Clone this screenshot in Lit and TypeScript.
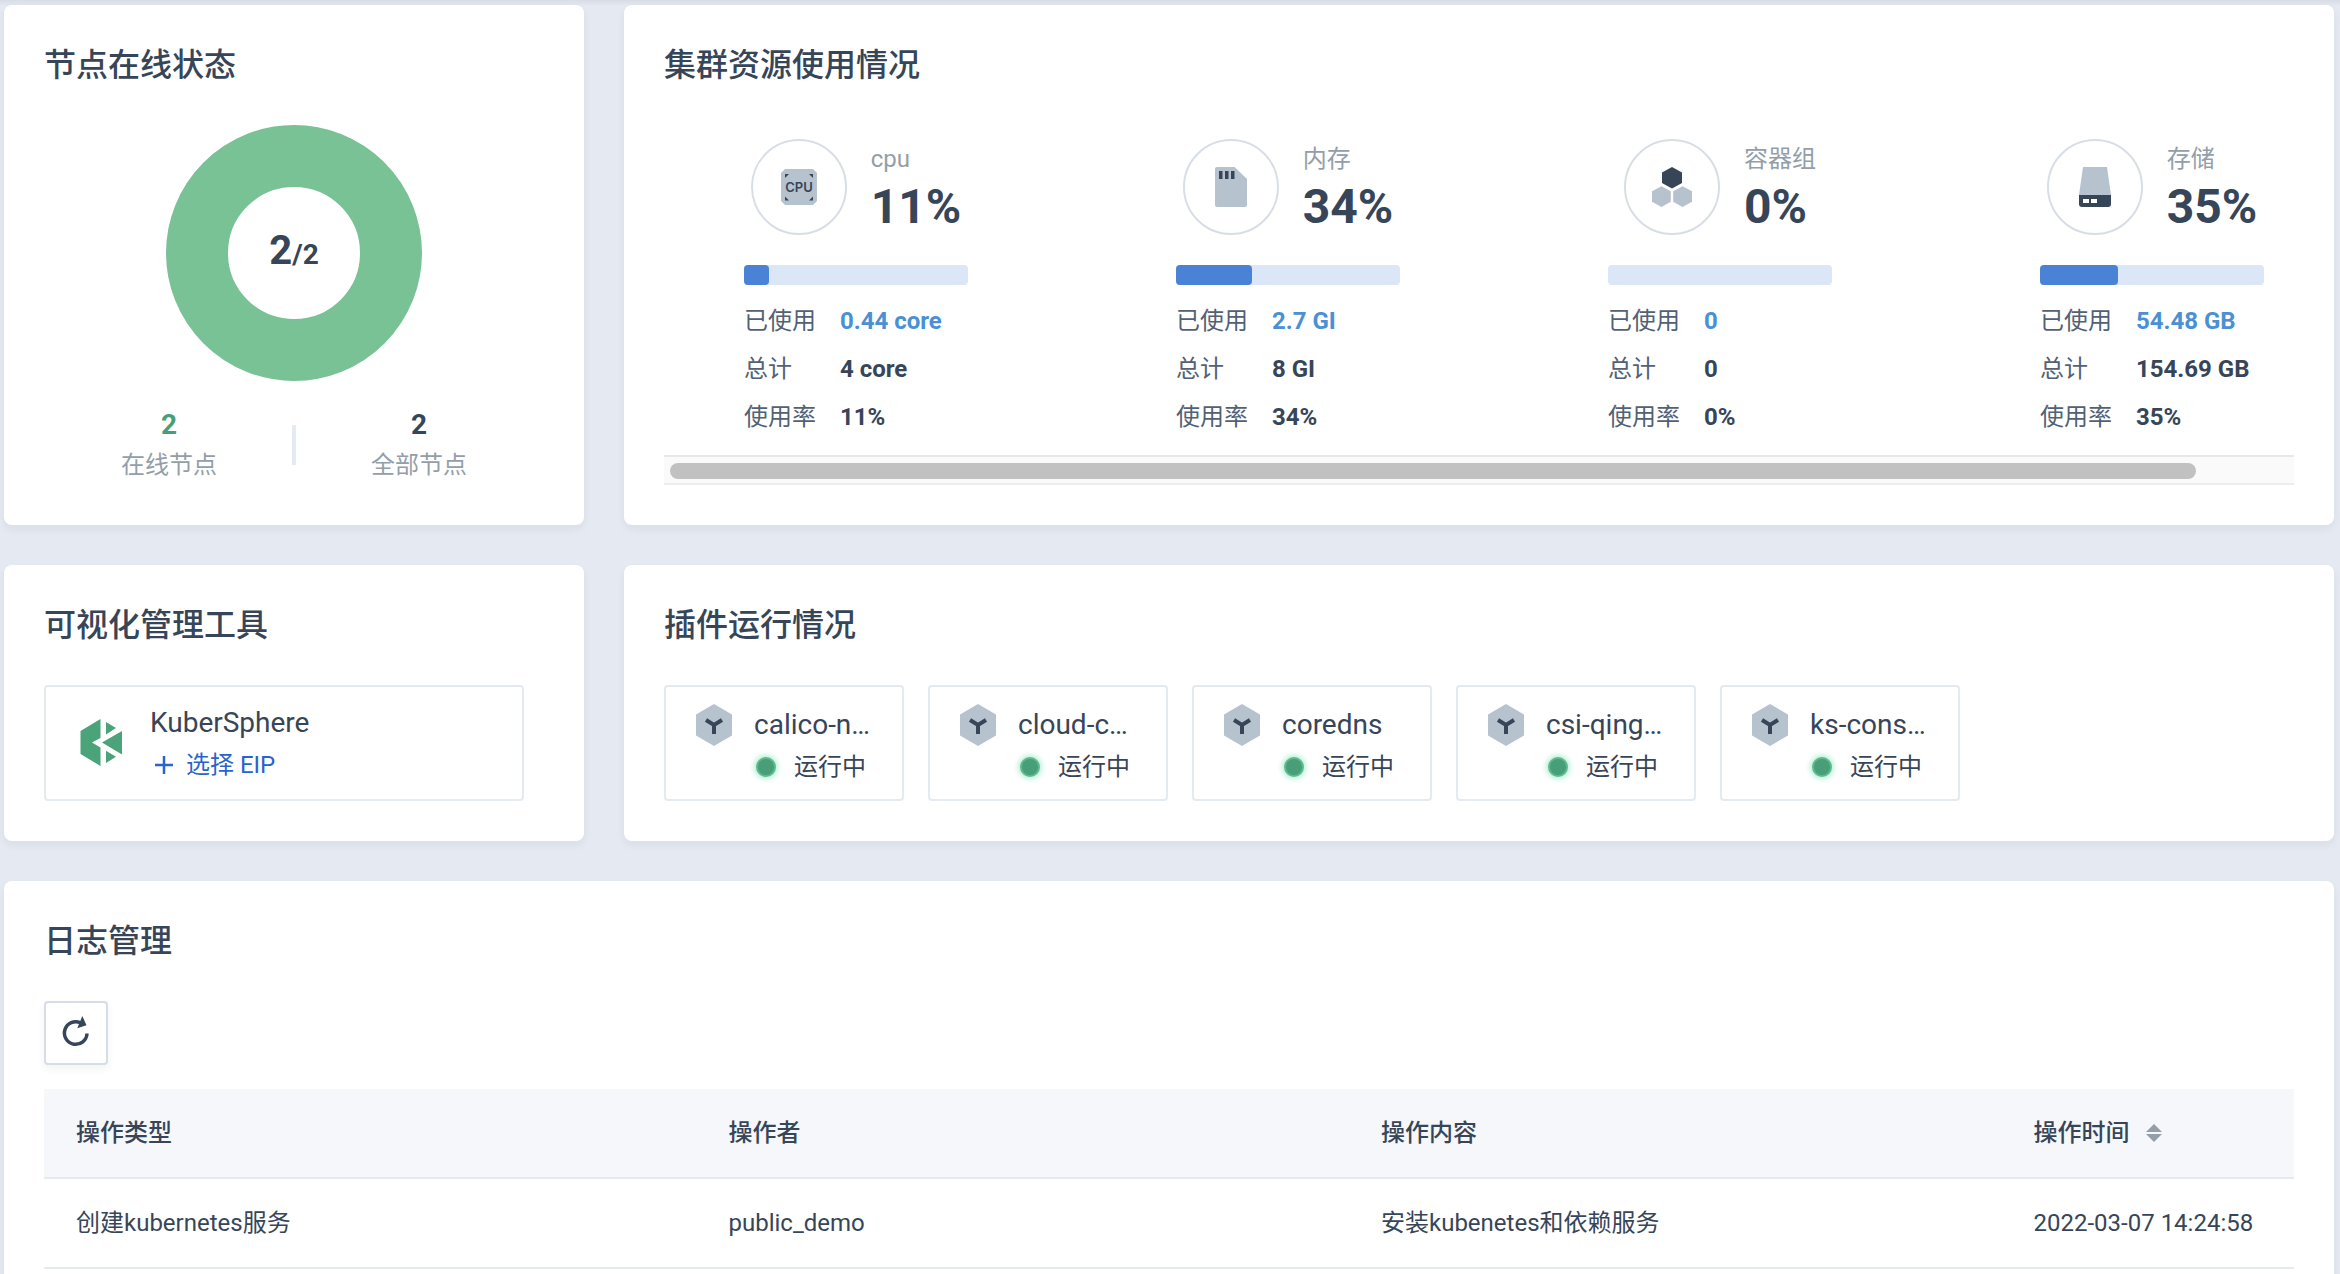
import { LitElement, html, css, svg } from "lit";
import { customElement } from "lit/decorators.js";

interface Metric {
  name: string;
  percent: number;
  used: string;
  total: string;
  icon: unknown;
}

const cpuIcon = svg`
  <path d="M6 2H34L38 6V34L34 38H6L2 34V6Z" fill="#b6c2cd" stroke-linejoin="round"/>
  <path d="M6 7h4l-4 4zM34 7h-4l4 4zM6 33.500h4l-4-4zM34 33.500h-4l4-4z" fill="#374558"/>
  <text x="20" y="25" text-anchor="middle" font-family="Inter, sans-serif" font-size="13" font-weight="600" fill="#374558">CPU</text>`;

const memoryIcon = svg`
  <path d="M6 0H23.500L36 12V38a2 2 0 0 1-2 2H6a2 2 0 0 1-2-2V2a2 2 0 0 1 2-2z" fill="#b6c2cd"/>
  <path d="M8 4h3.500v8H8zM14 4h3.500v8H14zM20 4h3.500v8H20z" fill="#374558"/>`;

const podIcon = svg`
  <path d="M20 0l10 5.500v10.500l-10 5.500-10-5.500V5.500z" fill="#374558"/>
  <path d="M9.500 19.300l9.300 5v10.400l-9.300 5.300L0 34.700V24.300zM30.500 19.300l9.500 5v10.400L30.500 40l-9.300-5.300V24.300z" fill="#b6c2cd"/>`;

const storageIcon = svg`
  <path d="M8 0H32L36 28H4z" fill="#b6c2cd"/>
  <path d="M4 28H36v9a3 3 0 0 1-3 3H7a3 3 0 0 1-3-3z" fill="#374558"/>
  <path d="M8 32h6v4H8zM16 32h6v4h-6z" fill="#fff"/>`;

const METRICS: Metric[] = [
  { name: "cpu", percent: 11, used: "0.44 core", total: "4 core", icon: cpuIcon },
  { name: "内存", percent: 34, used: "2.7 GI", total: "8 GI", icon: memoryIcon },
  { name: "容器组", percent: 0, used: "0", total: "0", icon: podIcon },
  { name: "存储", percent: 35, used: "54.48 GB", total: "154.69 GB", icon: storageIcon },
];

const PLUGINS = ["calico-n…", "cloud-c…", "coredns", "csi-qing…", "ks-cons…"];

const LOGS = [
  {
    type: "创建kubernetes服务",
    operator: "public_demo",
    content: "安装kubenetes和依赖服务",
    time: "2022-03-07 14:24:58",
  },
];

@customElement("app-root")
export class AppRoot extends LitElement {
  static styles = css`
    :host {
      display: block;
      box-sizing: border-box;
      height: 100vh;
      overflow: hidden;
      padding: 5px 6px 0 4px;
      background: linear-gradient(#d7dce5, #e5e9f1 6px) #e5e9f1;
      color: #374558;
      font-family: Roboto, "Noto Sans CJK SC", sans-serif;
      font-size: 24px;
      line-height: 40px;
    }
    *,
    *::before {
      box-sizing: border-box;
    }
    .page {
      display: grid;
      grid-template-columns: 580px minmax(0, 1fr);
      gap: 40px;
    }
    .card {
      padding: 40px;
      background: #fff;
      border-radius: 8px;
      box-shadow: 0 4px 8px rgba(36, 46, 66, 0.06);
    }
    .wide {
      grid-column: 1 / -1;
    }
    .title {
      margin: 0 0 40px;
      font-size: 32px;
      font-weight: 500;
      line-height: 40px;
    }
    button {
      margin: 0;
      padding: 0;
      border: 0;
      background: none;
      color: inherit;
      font: inherit;
      cursor: pointer;
    }
    svg {
      display: block;
      flex: none;
    }

    .donut {
      display: flex;
      align-items: center;
      justify-content: center;
      width: 256px;
      height: 256px;
      margin: 0 auto 24px;
      border: 62px solid #79c296;
      border-radius: 50%;
      font-size: 28px;
      font-weight: 700;
    }
    .online {
      font-size: 40px;
    }
    .stats {
      display: flex;
      align-items: center;
      text-align: center;
    }
    .stat {
      flex: 1;
    }
    .stat-value {
      font-size: 28px;
      font-weight: 700;
    }
    .green {
      color: #479e78;
    }
    .muted {
      color: #939ea9;
    }
    .divider {
      width: 4px;
      height: 40px;
      margin: 0 -2px;
      background: #e5e9f1;
    }

    .metrics {
      display: flex;
      padding: 14px 0;
      overflow: hidden;
    }
    .metric {
      flex: none;
      width: 432px;
      padding: 0 128px 0 80px;
    }
    .metric-head {
      display: flex;
      justify-content: center;
      gap: 24px;
      margin-bottom: 30px;
      white-space: nowrap;
    }
    .circle {
      display: flex;
      align-items: center;
      justify-content: center;
      width: 96px;
      height: 96px;
      border: 2px solid #d8dee5;
      border-radius: 50%;
    }
    .percent {
      font-size: 48px;
      font-weight: 700;
      line-height: 56px;
    }
    .bar {
      height: 20px;
      margin-bottom: 12px;
      border-radius: 4px;
      background: #dbe6f6;
    }
    .fill {
      height: 100%;
      border-radius: 4px;
      background: #4a83d6;
    }
    .facts {
      display: grid;
      grid-template-columns: 72px auto;
      column-gap: 24px;
      margin: 0;
      line-height: 48px;
      white-space: nowrap;
    }
    .facts dt {
      color: #526174;
    }
    .facts dd {
      margin: 0;
      font-weight: 700;
    }
    .facts .used {
      color: #4a90d2;
    }
    .track {
      height: 30px;
      padding: 6px;
      border-top: 2px solid #e8e8e8;
      border-bottom: 2px solid #ededed;
      background: #fafafa;
    }
    .thumb {
      width: 94.3%;
      height: 16px;
      border-radius: 8px;
      background: #c1c1c1;
    }

    .box {
      display: flex;
      height: 116px;
      border: 2px solid #e5e9f0;
      border-radius: 4px;
      background: #fff;
      white-space: nowrap;
    }
    .tool {
      align-items: center;
      gap: 28px;
      max-width: 480px;
      padding: 0 34px;
    }
    .name {
      font-size: 28px;
      line-height: 44px;
    }
    .link {
      display: flex;
      align-items: center;
      gap: 8px;
      color: #2a62d0;
    }
    .plugins {
      display: flex;
      gap: 24px;
    }
    .plugin {
      width: 240px;
      gap: 20px;
      padding: 16px 28px;
    }
    .status {
      display: flex;
      align-items: center;
      gap: 16px;
    }
    .dot {
      width: 20px;
      height: 20px;
      margin: 0 2px;
      border: 2px solid #5fb98e;
      border-radius: 50%;
      background: #479e78;
      box-shadow: 0 0 6px 1px #9be8c5;
    }

    .refresh {
      display: flex;
      align-items: center;
      justify-content: center;
      width: 64px;
      height: 64px;
      margin-bottom: 24px;
      border: 2px solid #d5dde6;
      border-radius: 4px;
      background: #fff;
      box-shadow: 0 4px 8px rgba(36, 46, 66, 0.06);
    }
    table {
      width: 100%;
      border-collapse: separate;
      border-spacing: 0;
      table-layout: fixed;
    }
    th,
    td {
      width: 29%;
      height: 90px;
      padding: 0 32px;
      border-bottom: 2px solid #e5e9f0;
      font-weight: 400;
      text-align: left;
      white-space: nowrap;
    }
    th {
      background: #f5f7fa;
      font-weight: 500;
    }
    th:last-child {
      width: 13%;
    }
    .sort {
      display: flex;
      align-items: center;
      gap: 16px;
    }
  `;

  private renderMetric(m: Metric) {
    return html`
      <section class="metric">
        <div class="metric-head">
          <div class="circle">
            <svg width="40" height="40" viewBox="0 0 40 40" aria-hidden="true">${m.icon}</svg>
          </div>
          <div>
            <div class="muted">${m.name}</div>
            <div class="percent">${m.percent}%</div>
          </div>
        </div>
        <div class="bar"><div class="fill" style="width:${m.percent}%"></div></div>
        <dl class="facts">
          <dt>已使用</dt>
          <dd class="used">${m.used}</dd>
          <dt>总计</dt>
          <dd>${m.total}</dd>
          <dt>使用率</dt>
          <dd>${m.percent}%</dd>
        </dl>
      </section>
    `;
  }

  private renderPlugin(name: string) {
    return html`
      <div class="box plugin">
        <svg width="40" height="44" viewBox="0 0 40 44" aria-hidden="true">
          <path d="M20 1l18 10.500v21L20 43 2 32.500v-21z" fill="#b6c2cd" />
          <path d="M12 17l8 5 8-5M20 21v10" fill="none" stroke="#374558" stroke-width="4" />
        </svg>
        <div>
          <div class="name">${name}</div>
          <div class="status"><span class="dot"></span>运行中</div>
        </div>
      </div>
    `;
  }

  render() {
    return html`
      <main class="page">
        <section class="card">
          <h2 class="title">节点在线状态</h2>
          <div class="donut"><div><span class="online">2</span>/2</div></div>
          <div class="stats">
            <div class="stat">
              <div class="stat-value green">2</div>
              <div class="muted">在线节点</div>
            </div>
            <div class="divider"></div>
            <div class="stat">
              <div class="stat-value">2</div>
              <div class="muted">全部节点</div>
            </div>
          </div>
        </section>

        <section class="card">
          <h2 class="title">集群资源使用情况</h2>
          <div class="metrics">${METRICS.map((m) => this.renderMetric(m))}</div>
          <div class="track"><div class="thumb"></div></div>
        </section>

        <section class="card">
          <h2 class="title">可视化管理工具</h2>
          <div class="box tool">
            <svg width="42" height="48" viewBox="0 0 42 48" aria-hidden="true">
              <path
                d="M20.500 0v19L12 23.500l8.500 5V47L.5 35V12zM26 3l10 6-10 6.500zM42 12v23.500L22 23.500zM26 31.700l10 6L26 44z"
                fill="#4ba37a"
              />
            </svg>
            <div>
              <div class="name">KuberSphere</div>
              <button class="link" type="button">
                <svg width="28" height="28" viewBox="0 0 28 28" aria-hidden="true">
                  <path d="M14 5v18M5 14h18" stroke="currentColor" stroke-width="2.500" />
                </svg>
                选择 EIP
              </button>
            </div>
          </div>
        </section>

        <section class="card">
          <h2 class="title">插件运行情况</h2>
          <div class="plugins">${PLUGINS.map((p) => this.renderPlugin(p))}</div>
        </section>

        <section class="card wide">
          <h2 class="title">日志管理</h2>
          <button class="refresh" type="button" aria-label="刷新">
            <svg width="40" height="40" viewBox="0 0 40 40" aria-hidden="true">
              <path
                d="M31 20.500A11.300 11.300 0 1 1 24.500 9.800"
                fill="none"
                stroke="#374558"
                stroke-width="3.500"
              />
              <path d="M26.300 3l4.200 9.300-9.200 3z" fill="#374558" />
            </svg>
          </button>
          <table>
            <thead>
              <tr>
                <th scope="col">操作类型</th>
                <th scope="col">操作者</th>
                <th scope="col">操作内容</th>
                <th scope="col">
                  <button class="sort" type="button">
                    操作时间
                    <svg width="16" height="18" viewBox="0 0 16 18" aria-hidden="true">
                      <path d="M8 0l8 8H0zM0 10h16l-8 8z" fill="#939ea9" />
                    </svg>
                  </button>
                </th>
              </tr>
            </thead>
            <tbody>
              ${LOGS.map(
                (r) => html`<tr>
                  <td>${r.type}</td>
                  <td>${r.operator}</td>
                  <td>${r.content}</td>
                  <td>${r.time}</td>
                </tr>`
              )}
            </tbody>
          </table>
        </section>
      </main>
    `;
  }
}
